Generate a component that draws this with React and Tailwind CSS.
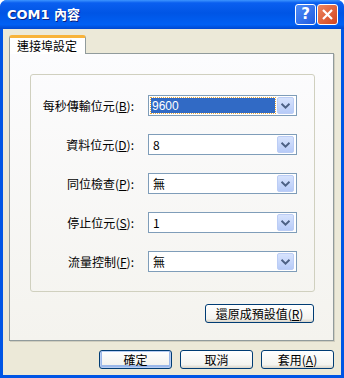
import React from "react"

const cjk = "font-['Noto_Sans_CJK_TC','Noto_Sans',sans-serif]"

// 設定列
const rows = [
  { label: "每秒傳輸位元", key: "B", value: "9600", selected: true },
  { label: "資料位元", key: "D", value: "8" },
  { label: "同位檢查", key: "P", value: "無" },
  { label: "停止位元", key: "S", value: "1" },
  { label: "流量控制", key: "F", value: "無" },
]

function Chevron() {
  return (
    <svg width="17" height="17" viewBox="0 0 17 17">
      <path d="M4 6.5 L8.5 11 L13 6.5" fill="none" stroke="#4D6185" strokeWidth="2.2" />
    </svg>
  )
}

function Combo({ value, selected }) {
  return (
    <div className="w-[149px] h-[21px] border border-[#7F9DB9] bg-white flex items-center px-[2px] gap-[2px]">
      {selected ? (
        <div className="flex-1 h-[15px] bg-[#316AC5] text-white outline-1 outline-dotted outline-[#E8A53A] flex items-center pl-[1px] text-[12px] leading-none font-['Liberation_Sans',sans-serif]">
          {value}
        </div>
      ) : (
        <div className={`flex-1 pl-[2px] text-[12px] leading-none text-black ${cjk}`}>{value}</div>
      )}
      <div className="w-[17px] h-[17px] rounded-[2px] border border-[#BCCDF5] bg-[linear-gradient(to_bottom,#D7E3FD,#B7CBF8)] flex items-center justify-center">
        <Chevron />
      </div>
    </div>
  )
}

function Btn({ children, w = "w-[73px]", def }) {
  return (
    <button
      className={`${w} h-[19px] rounded-[3px] border border-[#003C74] bg-[linear-gradient(to_bottom,#FFFFFF,#F3F3EF_80%,#D8D3C8)] text-[12px] leading-none text-black flex items-center justify-center ${cjk} ${
        def ? "shadow-[inset_0_0_0_1px_#B6CCF2,inset_0_-1px_0_2px_#9BB8EA]" : ""
      }`}
    >
      {children}
    </button>
  )
}

export default function App() {
  return (
    <div className="w-[344px] h-[378px] flex flex-col bg-[#0055E5] rounded-t-[7px] overflow-hidden">
      {/* Title bar */}
      <div className="h-[29px] flex items-center pl-[7px] pr-[6px] bg-[linear-gradient(to_bottom,#3D95FF_0%,#0A5FF0_10%,#0055E5_45%,#0060F4_85%,#0048D0_100%)]">
        <span className="flex-1 text-white font-bold text-[13px] [text-shadow:1px_1px_0_#0A1E80] font-['DejaVu_Sans','Noto_Sans_CJK_TC',sans-serif]">
          COM1 內容
        </span>
        <div className="flex gap-[1px]">
          <div className="w-[21px] h-[21px] rounded-[3px] border border-white bg-[linear-gradient(135deg,#4F8CF7,#1F5BE0)] flex items-center justify-center text-white font-bold text-[15px] leading-none font-['DejaVu_Sans',sans-serif]">
            ?
          </div>
          <div className="w-[21px] h-[21px] rounded-[3px] border border-white bg-[linear-gradient(135deg,#EE8660,#D2441E)] flex items-center justify-center">
            <svg width="13" height="13" viewBox="0 0 13 13">
              <path d="M2 2 L11 11 M11 2 L2 11" stroke="white" strokeWidth="2.2" />
            </svg>
          </div>
        </div>
      </div>

      {/* Client */}
      <div className="flex-1 mx-[3px] mb-[3px] bg-[#ECE9D8] flex flex-col pt-[6px] pl-[6px] pr-[7px]">
        {/* Tab */}
        <div className="flex">
          <div className="relative z-10 -mb-px w-[77px] h-[19px] bg-white border-x border-[#919B9C] rounded-t-[3px] border-t-[3px] border-t-[#F8B33A] flex items-center pl-[7px] text-[12px] leading-none text-black">
            <span className={cjk}>連接埠設定</span>
          </div>
        </div>

        {/* Panel */}
        <div className="w-[325px] h-[288px] border border-[#919B9C] shadow-[1px_1px_0_#D0CEBF] bg-[linear-gradient(to_bottom,#FCFCFE,#F4F3EE)] flex flex-col pt-[20px] pl-[20px]">
          <div className="w-[285px] h-[218px] rounded-[3px] border border-[#D0D0BF] pt-[20px] flex flex-col gap-[18px]">
            {rows.map((r) => (
              <div key={r.key} className="flex items-center h-[21px]">
                <div className={`w-[103px] text-right text-[12px] leading-none text-black ${cjk}`}>
                  {r.label}(<span className="underline">{r.key}</span>):
                </div>
                <div className="ml-[14px]">
                  <Combo value={r.value} selected={r.selected} />
                </div>
              </div>
            ))}
          </div>
          <div className="flex pl-[175px] mt-[12px]">
            <Btn w="w-[109px]">
              還原成預設值(<span className="underline">R</span>)
            </Btn>
          </div>
        </div>

        {/* Buttons */}
        <div className="flex justify-end gap-[8px] mt-[9px]">
          <Btn def>確定</Btn>
          <Btn>取消</Btn>
          <Btn>
            套用(<span className="underline">A</span>)
          </Btn>
        </div>
      </div>
    </div>
  )
}
